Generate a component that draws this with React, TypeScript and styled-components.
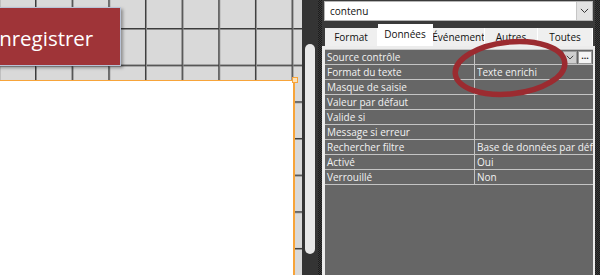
import React from 'react'
import styled, { createGlobalStyle } from 'styled-components'

const GlobalStyle = createGlobalStyle`
  html, body {
    margin: 0;
    padding: 0;
    width: 600px;
    height: 275px;
    overflow: hidden;
    background: #2a2a2a;
  }
  * {
    box-sizing: border-box;
  }
`

const ORANGE = '#f7a43a'

const rows: [string, string][] = [
  ['Source contrôle', ''],
  ['Format du texte', 'Texte enrichi'],
  ['Masque de saisie', ''],
  ['Valeur par défaut', ''],
  ['Valide si', ''],
  ['Message si erreur', ''],
  ['Rechercher filtre', 'Base de données par défaut'],
  ['Activé', 'Oui'],
  ['Verrouillé', 'Non'],
]

const tabs = [
  { label: 'Format', width: 53 },
  { label: 'Données', width: 55 },
  { label: 'Événement', width: 52 },
  { label: 'Autres', width: 53 },
  { label: 'Toutes', width: 55 },
]

function Chevron({ size = 9 }: { size?: number }) {
  return (
    <svg width={size} height={size * 0.6} viewBox="0 0 10 6">
      <path d="M1 1 L5 5 L9 1" fill="none" stroke="#333" strokeWidth="1.1" />
    </svg>
  )
}

export default function App() {
  return (
    <Root>
      <GlobalStyle />
      <LeftPane>
        <Header>
          <SaveButton>Enregistrer</SaveButton>
        </Header>
        <Detail>
          <Handle />
        </Detail>
      </LeftPane>

      <Scrollbar>
        <Thumb />
      </Scrollbar>

      <Panel>
        <Inner>
          <Combo>
            <ComboText>contenu</ComboText>
            <ComboButton>
              <Chevron />
            </ComboButton>
          </Combo>

          <TabStrip>
            {tabs.map((t) => (
              <Tab key={t.label} $active={t.label === 'Données'} style={{ width: t.width }}>
                {t.label}
              </Tab>
            ))}
          </TabStrip>

          <PropFrame>
            <PropGrid>
              {rows.map(([label, value], i) => (
                <Row key={label}>
                  <Label>{label}</Label>
                  <Value>
                    <ValueText>{value}</ValueText>
                    {i === 0 && (
                      <>
                        <MiniButton>
                          <Chevron size={8} />
                        </MiniButton>
                        <MiniButton $light>···</MiniButton>
                      </>
                    )}
                  </Value>
                </Row>
              ))}
            </PropGrid>
          </PropFrame>
        </Inner>
      </Panel>

      <Circle width="600" height="275" viewBox="0 0 600 275">
        <ellipse
          cx="510"
          cy="68"
          rx="55"
          ry="26"
          transform="rotate(-6 510 68)"
          fill="none"
          stroke="#9b2b30"
          strokeWidth="5.5"
        />
      </Circle>
    </Root>
  )
}

const Root = styled.div`
  position: relative;
  display: flex;
  width: 600px;
  height: 275px;
  overflow: hidden;
  font-family: 'Open Sans', 'Noto Sans', sans-serif;
`

const LeftPane = styled.div`
  width: 302px;
  flex: 0 0 302px;
  display: flex;
  flex-direction: column;
  background-color: #d9d9d9;
  background-image: linear-gradient(
      to right,
      #3c3c3c 0 1px,
      #8a8a8a 1px 2px,
      transparent 2px
    ),
    linear-gradient(to bottom, #3c3c3c 0 1px, #8a8a8a 1px 2px, transparent 2px);
  background-size: 36.67px 36.67px;
  background-position: 35px 28px;
`

const Header = styled.div`
  height: 80px;
  flex: 0 0 80px;
  padding-top: 7px;
  overflow: hidden;
`

const SaveButton = styled.div`
  width: 161px;
  height: 59px;
  margin-left: -40px;
  display: flex;
  align-items: center;
  justify-content: center;
  padding-top: 2px;
  background: #9f3438;
  border: 1px solid #b9c3d6;
  box-shadow: 2px 2px 3px rgba(0, 0, 0, 0.35);
  color: #fff;
  font-size: 20.5px;
`

const Detail = styled.div`
  position: relative;
  flex: 1;
  margin-right: 7px;
  background: #fff;
  border-top: 1px solid ${ORANGE};
  border-right: 2px solid ${ORANGE};
`

const Handle = styled.div`
  position: absolute;
  top: -4px;
  right: -5px;
  width: 6px;
  height: 6px;
  border: 1px solid ${ORANGE};
  background: #fde2b8;
`

const Scrollbar = styled.div`
  width: 16px;
  flex: 0 0 16px;
  display: flex;
  padding: 44px 3px 21px 3px;
  background: #343434;
`

const Thumb = styled.div`
  flex: 1;
  background: #e8e8e8;
  border-radius: 5px;
`

const Panel = styled.div`
  flex: 1;
  display: flex;
  padding: 0 5px 0 4px;
  background: repeating-conic-gradient(#1c1c1c 0 25%, #3a3a3a 0 50%) 0 0 / 2px 2px;
`

const Inner = styled.div`
  flex: 1;
  display: flex;
  flex-direction: column;
  background: #3a3a3a;
  padding-top: 1px;
`

const Combo = styled.div`
  height: 20px;
  margin: 0 2px 0 2px;
  display: flex;
  align-items: center;
  background: #fff;
  border: 1px solid #b5b5b5;
`

const ComboText = styled.span`
  flex: 1;
  padding-left: 5px;
  font-size: 10px;
  color: #111;
`

const ComboButton = styled.div`
  width: 16px;
  height: 18px;
  display: flex;
  align-items: center;
  justify-content: center;
  background: #e3e3e3;
  border-left: 1px solid #c6c6c6;
`

const TabStrip = styled.div`
  height: 22px;
  margin: 3px 2px 0 3px;
  display: flex;
  align-items: flex-end;
`

const Tab = styled.div<{ $active?: boolean }>`
  height: ${(p) => (p.$active ? '22px' : '18px')};
  display: flex;
  align-items: center;
  justify-content: center;
  padding-bottom: ${(p) => (p.$active ? '2px' : '0')};
  background: ${(p) => (p.$active ? '#ffffff' : '#efefef')};
  border-right: 1px solid #ffffff;
  font-size: 10px;
  color: #111;
  white-space: nowrap;
  overflow: hidden;
`

const PropFrame = styled.div`
  flex: 1;
  display: flex;
  padding: 3px 2px 0 3px;
  background: #ececec;
`

const PropGrid = styled.div`
  flex: 1;
  background: #666;
  border-top: 1px solid #c4c4c4;
`

const Row = styled.div`
  display: grid;
  grid-template-columns: 149px 1fr;
  height: 15px;
  border-bottom: 1px solid #c4c4c4;
`

const Label = styled.div`
  padding-left: 2px;
  font-size: 10px;
  line-height: 14px;
  color: #f2f2f2;
  white-space: nowrap;
`

const Value = styled.div`
  display: flex;
  align-items: center;
  min-width: 0;
  border-left: 1px solid #c4c4c4;
  padding-left: 2px;
`

const ValueText = styled.span`
  flex: 1;
  min-width: 0;
  overflow: hidden;
  white-space: nowrap;
  font-size: 10px;
  line-height: 14px;
  color: #f2f2f2;
`

const MiniButton = styled.div<{ $light?: boolean }>`
  width: 14px;
  height: 13px;
  margin-right: 1px;
  display: flex;
  align-items: center;
  justify-content: center;
  background: ${(p) => (p.$light ? '#f4f4f4' : '#cfcfcf')};
  border: 1px solid #9a9a9a;
  font-size: 9px;
  font-weight: bold;
  line-height: 1;
  color: #222;
`

const Circle = styled.svg`
  position: absolute;
  left: 0;
  top: 0;
  pointer-events: none;
`
